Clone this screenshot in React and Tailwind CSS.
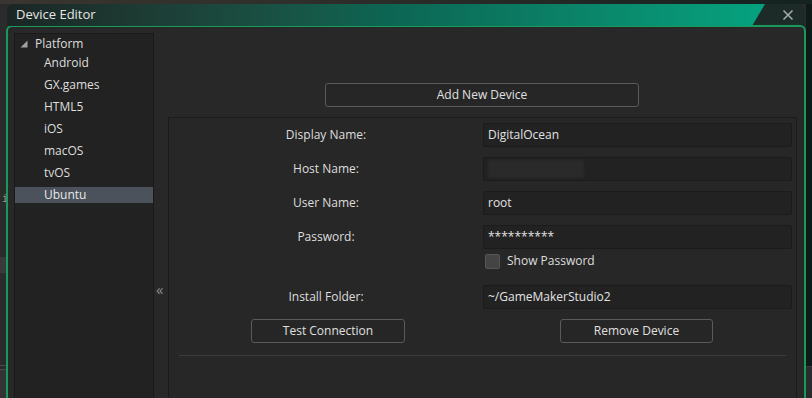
import React from "react";

const font = { fontFamily: '"Open Sans", "Noto Sans", sans-serif' };

function Input({ children, blurred }) {
  return (
    <div className="h-[24px] w-[309px] bg-[#222222] border border-[#1b1b1b] rounded-[2px] flex items-center pl-[4px] text-[12px] text-[#e2e2e2]">
      {blurred ? (
        <div className="h-[18px] w-[96px] bg-[#2a2a2a] rounded-[2px] blur-[1px]" />
      ) : (
        children
      )}
    </div>
  );
}

function Row({ label, children, className = "" }) {
  return (
    <div className={"flex items-center " + className}>
      <div className="w-[314px] text-center text-[12px] text-[#dedede]">{label}</div>
      {children}
    </div>
  );
}

function Button({ children, className = "" }) {
  return (
    <div
      className={
        "h-[24px] border border-[#5a5a5a] rounded-[3px] bg-[#262626] flex items-center justify-center text-[12px] text-[#e0e0e0] " +
        className
      }
    >
      {children}
    </div>
  );
}

export default function App() {
  const platforms = ["Android", "GX.games", "HTML5", "iOS", "macOS", "tvOS", "Ubuntu"];
  return (
    <div
      className="w-[812px] h-[398px] overflow-hidden bg-[#2b2b2b] flex flex-col"
      style={font}
    >
      <div className="h-[4px] shrink-0 bg-gradient-to-r from-[#3a3530] via-[#2a2c29] to-[#142220]" />
      <div className="flex flex-1 min-h-0">
        {/* left gutter */}
        <div className="w-[6px] shrink-0 flex flex-col bg-[#2b2b2b]">
          <div className="h-[189px]" />
          <div className="h-[12px] text-[10px] leading-[12px] text-[#9a9a9a] pl-[2px]" style={{ fontFamily: '"DejaVu Sans Mono", monospace' }}>i</div>
          <div className="h-[52px]" />
          <div className="h-[16px] bg-[#3a3a3a]" />
          <div className="h-[92px]" />
          <div className="h-[1px] bg-[#4a4a4a]" />
          <div className="h-[3px]" />
          <div className="h-[1px] bg-[#4a4a4a]" />
          <div className="flex-1 bg-[#343434]" />
        </div>

        {/* window */}
        <div className="w-[800px] shrink-0 flex flex-col">
          {/* title bar */}
          <div className="h-[22px] mx-[1px] rounded-t-[7px] bg-[#1c2a28] flex shrink-0 overflow-hidden">
            <div className="w-[758px] h-full bg-gradient-to-r from-[#1b2624] via-[#0c6552] to-[#05a27f] [clip-path:polygon(0_0,100%_0,calc(100%-13px)_100%,0_100%)] flex items-center pl-[9px] text-[13px] text-[#e6e6e6]">
              Device Editor
            </div>
            <div className="flex-1 flex items-center justify-end pr-[11px]">
              <svg width="12" height="12" viewBox="0 0 12 12">
                <path d="M1.5 1.5 L10.5 10.5 M10.5 1.5 L1.5 10.5" stroke="#a3a8ad" strokeWidth="1.6" />
              </svg>
            </div>
          </div>

          {/* frame */}
          <div className="flex-1 min-h-0 -mt-[1px] border-[2px] border-b-0 border-[#179a5c] rounded-t-[6px] bg-[#282828] flex pt-[6px] pl-[6px]">
            {/* tree */}
            <div className="w-[140px] shrink-0 bg-[#222222] border border-[#1a1a1a] border-b-0 pt-[1px]">
              <div className="h-[18px] flex items-center pl-[5px] text-[12px] text-[#dedede]">
                <svg width="8" height="8" viewBox="0 0 8 8" className="mr-[7px]">
                  <path d="M7.5 0.5 L7.5 7.5 L0.5 7.5 Z" fill="#a0a0a0" />
                </svg>
                Platform
              </div>
              {platforms.map((p, i) => (
                <div
                  key={p}
                  className={
                    "h-[16px] flex items-center pl-[29px] text-[12px] " +
                    (i === 0 ? "mt-[2px] " : "mt-[6px] ") +
                    (p === "Ubuntu" ? "bg-[#4b525b] text-[#e8e8e8]" : "text-[#dedede]")
                  }
                >
                  {p}
                </div>
              ))}
            </div>

            {/* splitter */}
            <div className="w-[14px] shrink-0 pt-[248px] pl-[2px] text-[15px] text-[#8c8c8c] leading-[16px]">
              «
            </div>

            {/* right */}
            <div className="flex-1 min-w-0 flex flex-col pt-[50px]">
              <div className="flex">
                <Button className="ml-[157px] w-[314px] h-[24px]">Add New Device</Button>
              </div>
              <div className="mt-[10px] mr-[7px] flex-1 bg-[#272727] border border-[#1b1b1b] border-b-0 pt-[5px] flex flex-col">
                <Row label="Display Name:">
                  <Input>DigitalOcean</Input>
                </Row>
                <Row label="Host Name:" className="mt-[10px]">
                  <Input blurred />
                </Row>
                <Row label="User Name:" className="mt-[10px]">
                  <Input>root</Input>
                </Row>
                <Row label="Password:" className="mt-[10px]">
                  <Input>**********</Input>
                </Row>
                <div className="flex items-center h-[16px] mt-[4px]">
                  <div className="w-[316px]" />
                  <div className="w-[15px] h-[15px] bg-[#444444] border border-[#555555] rounded-[2px]" />
                  <div className="ml-[7px] text-[12px] text-[#dedede]">Show Password</div>
                </div>
                <Row label="Install Folder:" className="mt-[16px]">
                  <Input>~/GameMakerStudio2</Input>
                </Row>
                <div className="flex mt-[10px]">
                  <Button className="ml-[82px] w-[154px] h-[24px]">Test Connection</Button>
                  <Button className="ml-[155px] w-[153px] h-[24px]">Remove Device</Button>
                </div>
                <div className="mt-[12px] ml-[10px] mr-[10px] h-[1px] bg-[#3c3c3c]" />
              </div>
            </div>
          </div>
        </div>

        {/* right gutter */}
        <div className="w-[6px] shrink-0 flex flex-col">
          <div className="h-[362px] bg-[#0d1a18]" />
          <div className="h-[1px] bg-[#3a3a3a]" />
          <div className="flex-1 bg-[#2b2b2b]" />
        </div>
      </div>
    </div>
  );
}
